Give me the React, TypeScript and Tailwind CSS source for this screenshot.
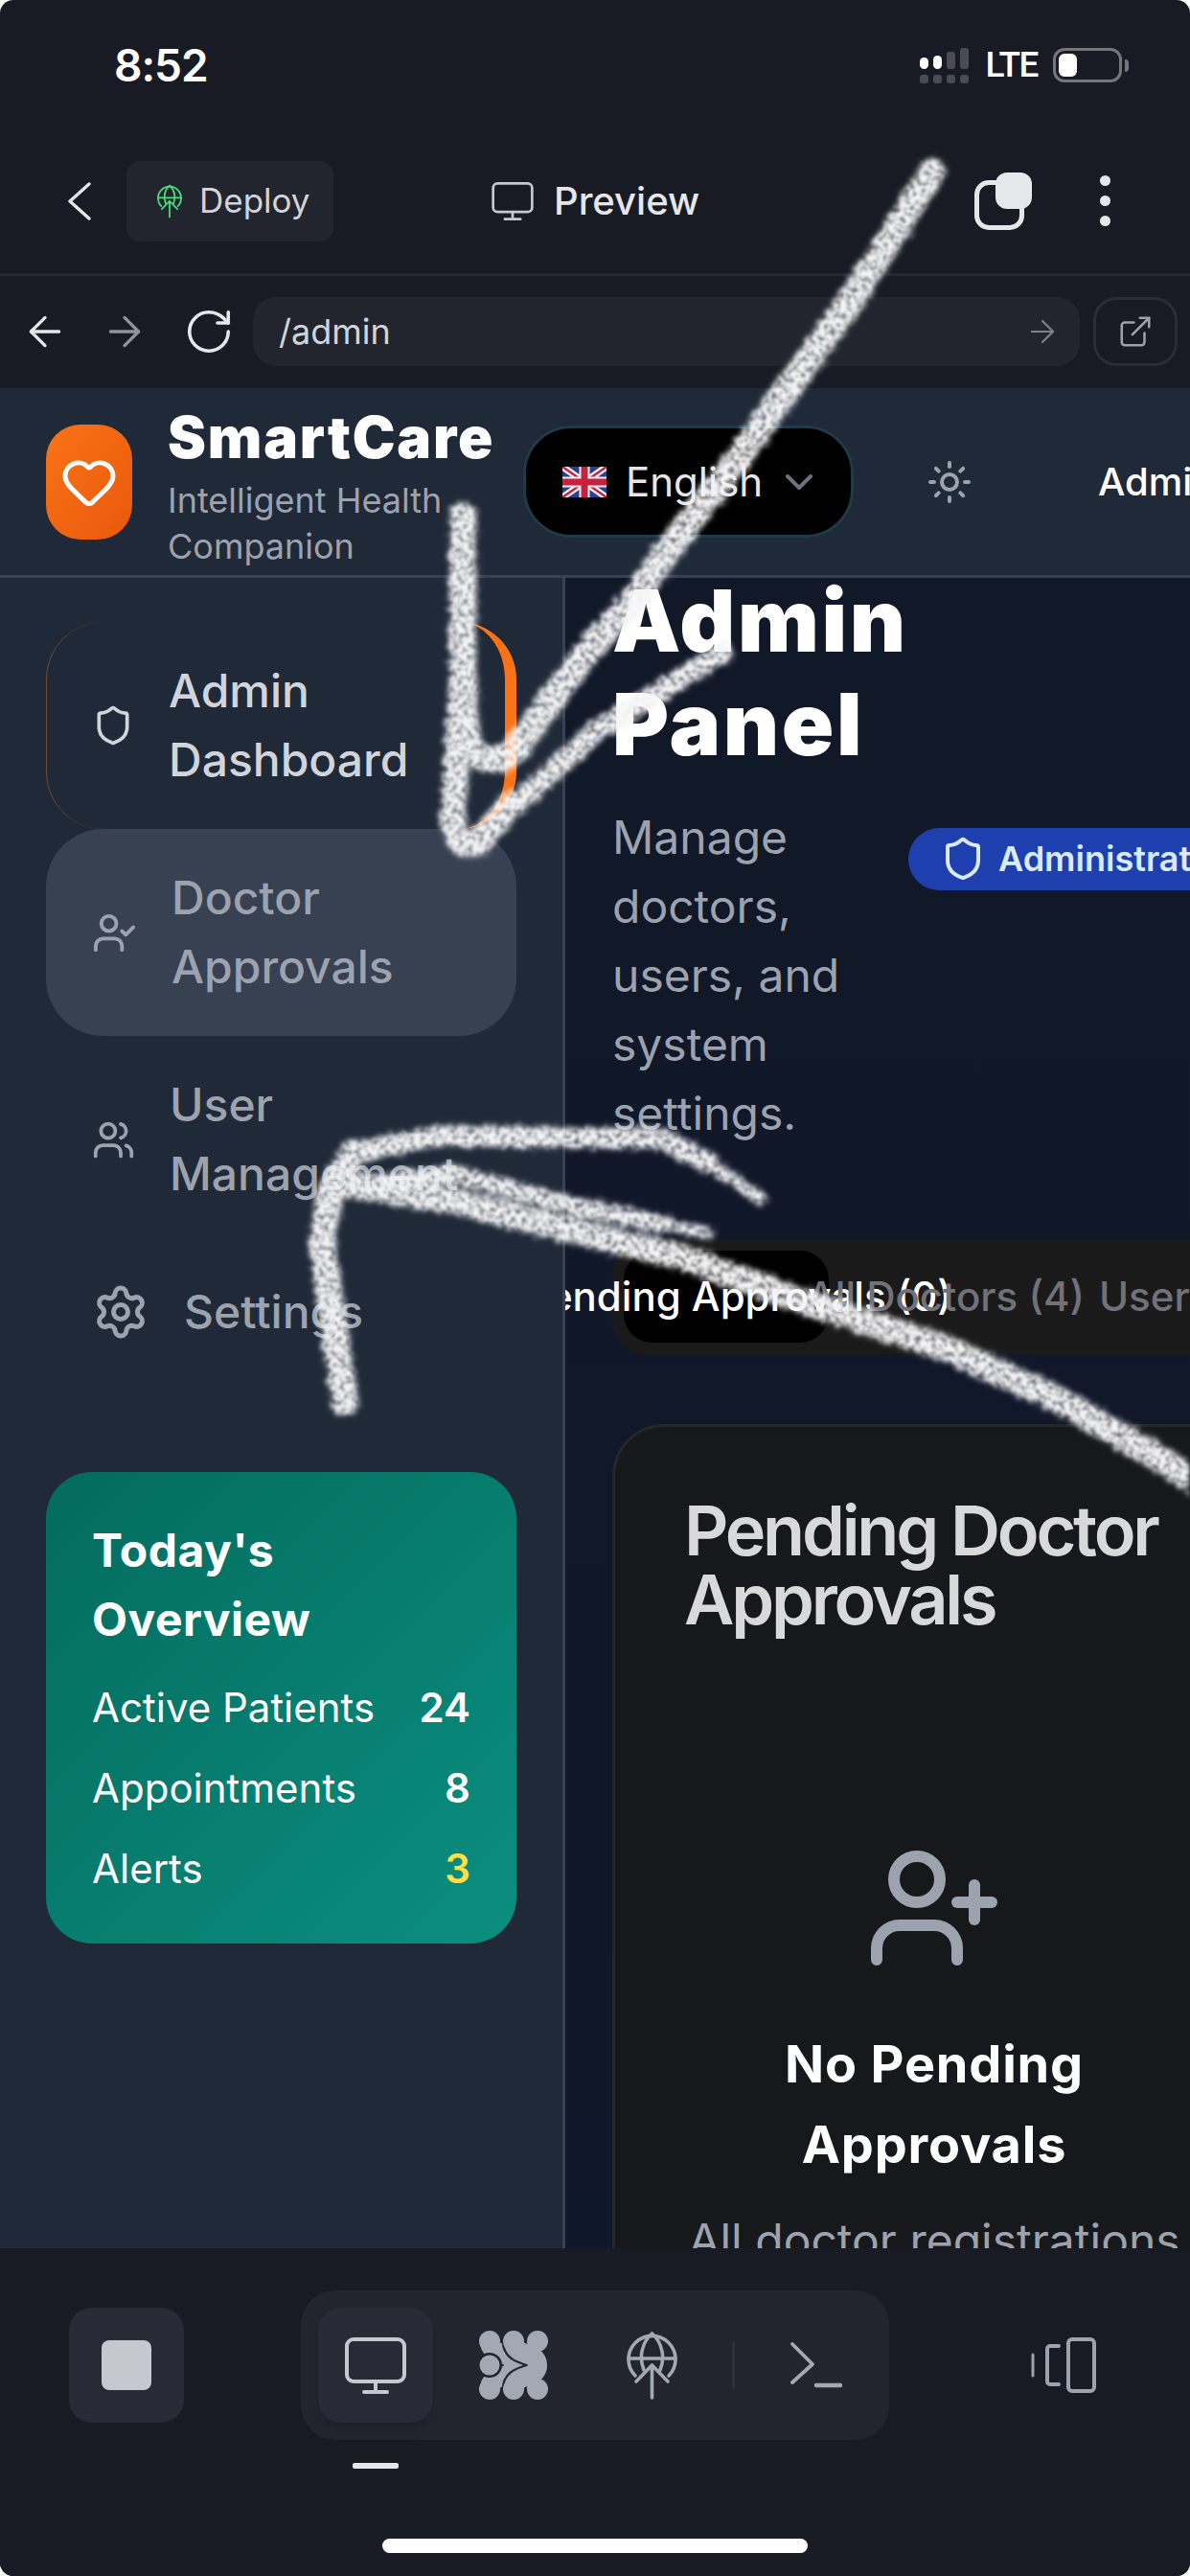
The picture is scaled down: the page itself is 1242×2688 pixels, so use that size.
import React from "react";
import {
	ArrowLeft,
	ArrowRight,
	ChevronDown,
	ExternalLink,
	Heart,
	RotateCw,
	Settings,
	Shield,
	Sun,
	UserCheck,
	UserPlus,
	Users,
} from "lucide-react";

function MonitorIcon({ className }: { className: string }) {
	return (
		<svg viewBox="0 0 64 59" fill="none" stroke="currentColor" strokeWidth="4" strokeLinecap="round" className={className}>
			<rect x="2" y="2" width="60" height="44" rx="7" />
			<path d="M32 46v10M20 57h24" />
		</svg>
	);
}

function GlobeUpIcon({ className }: { className: string }) {
	return (
		<svg viewBox="0 0 53 71" fill="none" stroke="currentColor" strokeWidth="3.6" strokeLinecap="round" strokeLinejoin="round" className={className}>
			<path d="M9 46A24.5 24.5 0 1 1 44 46" />
			<path d="M2 28h49" />
			<path d="M26.5 2C15 12 13 28 18 40M26.5 2C38 12 40 28 35 40" />
			<path d="M26.5 69V36M10 52l16.5-17L43 52" />
		</svg>
	);
}

function BlobsIcon({ className }: { className: string }) {
	const bg = "#22252e";
	const under = ["M11 11C11 28 36 20 36 36", "M11 61C11 44 36 52 36 36"];
	const over = ["M36 11C36 28 61 20 61 36", "M36 61C36 44 61 52 61 36"];
	const caps = [
		[11, 11],
		[36, 11],
		[61, 11],
		[11, 61],
		[36, 61],
		[61, 61],
	];
	return (
		<svg viewBox="0 0 72 72" fill="none" strokeLinecap="round" className={className}>
			{under.map((d) => (
				<path key={d} d={d} stroke="currentColor" strokeWidth="20" />
			))}
			<circle cx="11" cy="36" r="13" fill={bg} />
			<circle cx="11" cy="36" r="10.5" fill="currentColor" />
			{over.map((d) => (
				<path key={d} d={d} stroke={bg} strokeWidth="24.5" />
			))}
			{over.map((d) => (
				<path key={d + "-fill"} d={d} stroke="currentColor" strokeWidth="20" />
			))}
			{caps.map(([cx, cy]) => (
				<circle key={`${cx}-${cy}`} cx={cx} cy={cy} r="11" fill="currentColor" />
			))}
		</svg>
	);
}

function UkFlag() {
	return (
		<svg viewBox="0 0 46 32" className="w-[46px] h-[32px] shrink-0">
			<rect width="46" height="32" rx="2" fill="#27408f" />
			<path d="M0 0l46 32M46 0L0 32" stroke="#f1f1f4" strokeWidth="7" />
			<path d="M0 0l46 32M46 0L0 32" stroke="#c8213c" strokeWidth="2.4" />
			<path d="M23 0v32M0 16h46" stroke="#f1f1f4" strokeWidth="11" />
			<path d="M23 0v32M0 16h46" stroke="#c8213c" strokeWidth="7" />
		</svg>
	);
}

// pen marks scribbled on top of the screenshot
function Scribble() {
	return (
		<svg viewBox="0 0 1242 2688" fill="none" strokeLinecap="round" strokeLinejoin="round" className="absolute inset-0 w-[1242px] h-[2688px] pointer-events-none">
			<defs>
				<filter id="chalk" filterUnits="userSpaceOnUse" x="0" y="0" width="1242" height="2688">
					<feTurbulence type="fractalNoise" baseFrequency="0.18" numOctaves="3" seed="7" result="noise" />
					<feDisplacementMap in="SourceGraphic" in2="noise" scale="14" xChannelSelector="R" yChannelSelector="G" result="rough" />
					<feGaussianBlur in="rough" stdDeviation="2.4" result="soft" />
					<feColorMatrix in="noise" type="matrix" values="0 0 0 0 0  0 0 0 0 0  0 0 0 0 0  1.5 0 0 0 0.12" result="grain" />
					<feComposite in="soft" in2="grain" operator="in" />
					<feGaussianBlur stdDeviation="1.3" />
				</filter>
			</defs>
			<g filter="url(#chalk)" stroke="#f4f4f6">
				<path strokeWidth="28" d="M973 179L884 320L828 397L773 475L699 572L662 625L606 688L540 780C525 796 505 798 490 780C483 760 486 720 483 693L483 538" />
				<path strokeWidth="26" d="M483 700L477 780L473 862C478 880 490 886 502 878L532 839" />
				<path strokeWidth="22" d="M492 880L532 845L625 761L754 681" />
				<path strokeWidth="27" d="M1250 1546L1110 1463L988 1407L836 1357L715 1313L594 1283L472 1253L369 1237" />
				<path strokeWidth="28" d="M360 1463L348 1380L336 1297L345 1243L369 1203" />
				<path strokeWidth="22" d="M345 1243L369 1203L460 1185L581 1187L691 1188L739 1213" />
				<path strokeWidth="13" d="M725 1203L760 1228L794 1250" />
				<path strokeWidth="19" d="M351 1240L472 1225L594 1257L690 1277" />
				<path strokeWidth="12" d="M680 1274L739 1287" />
			</g>
		</svg>
	);
}

function StatusBar() {
	return (
		<div className="h-[136px] flex items-center pl-[119px]">
			<span className="text-[46px] font-semibold text-white tracking-[-1px]">8:52</span>
			<div className="ml-auto mr-[64px] flex items-center">
				<div className="flex flex-col gap-[6px] w-[65px]">
					<div className="flex items-end gap-[5px] h-[22px]">
						<div className="w-[9px] h-[12px] rounded-full bg-white" />
						<div className="w-[9px] h-[14px] rounded-full bg-white" />
						<div className="w-[9px] h-[18px] rounded-[3px] bg-[#4a4c55]" />
						<div className="w-[9px] h-[22px] rounded-[3px] bg-[#4a4c55]" />
					</div>
					<div className="flex gap-[5px]">
						<div className="w-[9px] h-[9px] rounded-[3px] bg-[#4a4c55]" />
						<div className="w-[9px] h-[9px] rounded-[3px] bg-[#4a4c55]" />
						<div className="w-[9px] h-[9px] rounded-[3px] bg-[#4a4c55]" />
						<div className="w-[9px] h-[9px] rounded-[3px] bg-[#4a4c55]" />
					</div>
				</div>
				<span className="ml-[4px] font-['Roboto',sans-serif] text-[37px] font-medium text-white tracking-[-1.5px]">LTE</span>
				<div className="ml-[16px] w-[72px] h-[36px] rounded-[12px] border-[3.5px] border-[#74767c] p-[3px]">
					<div className="w-[19px] h-full rounded-[6px] bg-white" />
				</div>
				<div className="ml-[3px] w-[4px] h-[13px] rounded-r-full bg-[#74767c]" />
			</div>
		</div>
	);
}

function ToolBar() {
	return (
		<div className="h-[152px] flex items-center pb-[2px] border-b-[3px] border-[#262933]">
			<svg viewBox="0 0 24 40" fill="none" stroke="#e5e7eb" strokeWidth="3.4" strokeLinecap="round" strokeLinejoin="round" className="ml-[71px] w-[24px] h-[40px]">
				<path d="M22 2L2 20l20 18" />
			</svg>
			<div className="ml-[37px] w-[216px] h-[84px] rounded-[14px] bg-[#22252e] flex items-center pl-[32px] gap-[18px]">
				<GlobeUpIcon className="w-[26px] h-[36px] text-[#4ade80]" />
				<span className="text-[35px] text-[#d1d5db]">Deploy</span>
			</div>
			<MonitorIcon className="ml-[165px] w-[44px] h-[40px] text-[#c5c8ce]" />
			<span className="ml-[21px] text-[40px] font-medium text-[#e5e7eb]">Preview</span>
			<div className="relative ml-[287px] w-[60px] h-[60px]">
				<div className="absolute left-0 bottom-0 w-[52px] h-[52px] rounded-[15px] border-[5px] border-[#e5e7eb]" />
				<div className="absolute right-0 top-0 w-[38px] h-[38px] rounded-[12px] bg-[#e5e7eb]" />
			</div>
			<div className="ml-[71px] flex flex-col gap-[10px]">
				<div className="w-[11px] h-[11px] rounded-full bg-[#e5e7eb]" />
				<div className="w-[11px] h-[11px] rounded-full bg-[#e5e7eb]" />
				<div className="w-[11px] h-[11px] rounded-full bg-[#e5e7eb]" />
			</div>
		</div>
	);
}

function UrlBar() {
	return (
		<div className="h-[117px] flex items-center pb-[2px]">
			<ArrowLeft strokeWidth={1.6} className="ml-[22px] w-[50px] h-[50px] text-[#e5e7eb]" />
			<ArrowRight strokeWidth={1.6} className="ml-[33px] w-[50px] h-[50px] text-[#8f939b]" />
			<RotateCw strokeWidth={1.6} className="ml-[36px] w-[54px] h-[54px] text-[#e5e7eb]" />
			<div className="ml-[19px] w-[863px] h-[72px] rounded-[24px] bg-[#22252e] flex items-center pl-[27px] pr-[20px]">
				<span className="text-[36px] text-[#d1d5db]">/admin</span>
				<ArrowRight strokeWidth={1.4} className="ml-auto w-[38px] h-[38px] text-[#7f828a]" />
			</div>
			<div className="ml-[14px] w-[88px] h-[72px] rounded-[24px] border-[3px] border-[#2a2d36] flex items-center justify-center">
				<ExternalLink strokeWidth={1.6} className="w-[38px] h-[38px] text-[#9ca3af]" />
			</div>
		</div>
	);
}

function AppHeader() {
	return (
		<div className="h-[198px] shrink-0 bg-[#1f2937] border-b-[3px] border-[#374151] flex items-center overflow-hidden">
			<div className="ml-[48px] w-[90px] h-[120px] shrink-0 rounded-[36px] bg-gradient-to-br from-[#f97316] to-[#ea580c] flex items-center justify-center">
				<Heart strokeWidth={2} className="w-[60px] h-[60px] text-white" />
			</div>
			<div className="ml-[37px] w-[335px] shrink-0 pt-[3px]">
				<div className="text-[60px] leading-[84px] font-black text-white tracking-[1.8px]">SmartCare</div>
				<div className="text-[36px] leading-[48px] text-[#9ca3af]">Intelligent Health Companion</div>
			</div>
			<div className="ml-[36px] w-[345px] h-[117px] shrink-0 rounded-[50px] bg-black border-[3px] border-[#1f3b47] flex items-center pl-[38px]">
				<UkFlag />
				<span className="ml-[20px] text-[42px] text-[#e5e7eb]">English</span>
				<ChevronDown strokeWidth={2} className="ml-[14px] w-[48px] h-[48px] text-[#6b7280]" />
			</div>
			<Sun strokeWidth={2} className="ml-[76px] w-[48px] h-[48px] shrink-0 text-[#9ca3af]" />
			<span className="ml-[131px] text-[40px] font-medium text-white whitespace-nowrap">Admin</span>
		</div>
	);
}

function NavItem({ icon, label, className }: { icon: React.ReactNode; label: string; className: string }) {
	return (
		<div className={`flex items-center gap-[36px] px-[48px] py-[36px] rounded-[60px] text-[48px] leading-[72px] font-medium ${className}`}>
			{icon}
			<span>{label}</span>
		</div>
	);
}

function Sidebar() {
	return (
		<aside className="w-[590px] shrink-0 border-r-[3px] border-[#374151] bg-[#1f2937] px-[48px] pt-[46px]">
			<NavItem
				label="Admin Dashboard"
				className="text-[#d1d5db] border-r-[12px] border-l-[1.5px] border-r-[#f97316] border-l-[#7a4a2c] !pl-[47px]"
				icon={<Shield strokeWidth={2} className="w-[44px] h-[46px] shrink-0" />}
			/>
			<NavItem
				label="Doctor Approvals"
				className="text-[#9ca3af] bg-[#374151]"
				icon={<UserCheck strokeWidth={2} className="w-[47px] h-[47px] shrink-0" />}
			/>
			<NavItem
				label="User Management"
				className="text-[#9ca3af]"
				icon={<Users strokeWidth={2} className="w-[45px] h-[45px] shrink-0" />}
			/>
			<NavItem
				label="Settings"
				className="text-[#9ca3af]"
				icon={<Settings strokeWidth={2} className="w-[60px] h-[60px] shrink-0" />}
			/>
			<div className="mt-[95px] rounded-[48px] p-[48px] bg-gradient-to-br from-[#036b5e] to-[#0c8f80] text-white">
				<div className="-mt-[2px] text-[48px] leading-[72px] font-bold tracking-[0.5px]">Today's Overview</div>
				<div className="mt-[26px] flex flex-col gap-[24px] text-[42px] leading-[60px]">
					<div className="flex justify-between">
						<span>Active Patients</span>
						<span className="font-semibold">24</span>
					</div>
					<div className="flex justify-between">
						<span>Appointments</span>
						<span className="font-semibold">8</span>
					</div>
					<div className="flex justify-between">
						<span>Alerts</span>
						<span className="font-semibold text-[#fde047]">3</span>
					</div>
				</div>
			</div>
		</aside>
	);
}

function MainPanel() {
	return (
		<main className="flex-1 min-w-0 overflow-hidden bg-gradient-to-b from-[#111827] to-[#0f172a] pl-[49px]">
			<div className="-mt-[9px] flex items-center">
				<div className="w-[309px] shrink-0">
					<h1 className="text-[90px] leading-[108px] font-black text-white tracking-[2.6px]">Admin Panel</h1>
					<p className="mt-[28px] text-[48px] leading-[72px] text-[#9ca3af]">Manage doctors, users, and system settings.</p>
				</div>
				<div className="shrink-0 h-[65px] rounded-full bg-[#1e40af] text-[#dbeafe] flex items-center pl-[33px] pr-[36px] gap-[13px]">
					<Shield strokeWidth={2} className="w-[48px] h-[48px]" />
					<span className="text-[36px] font-semibold whitespace-nowrap">Administrator</span>
				</div>
			</div>
			<div className="mt-[95px] w-[900px] h-[120px] rounded-[36px] bg-[#1a1a1a] p-[12px] flex gap-[15px] text-[42px] font-medium leading-[60px]">
				<div className="w-[214px] shrink-0 pl-[24px] rounded-[30px] bg-black text-white flex items-center justify-center whitespace-nowrap">Pending Approvals (0)</div>
				<div className="w-[214px] shrink-0 text-[#71717a] flex items-center justify-center whitespace-nowrap">All Doctors (4)</div>
				<div className="w-[214px] shrink-0 pl-[38px] text-[#71717a] flex items-center whitespace-nowrap">User Management</div>
			</div>
			<section className="mt-[73px] w-[672px] rounded-[54px] border-[3px] border-[#27272a] bg-[#17181c] p-[72px]">
				<h2 className="text-[72px] leading-[72px] font-semibold tracking-[-3.2px] text-[#d9d9db]">Pending Doctor Approvals</h2>
				<div className="mt-[214px] flex flex-col items-center text-center">
					<UserPlus strokeWidth={2} className="w-[144px] h-[144px] text-[#9ca3af]" />
					<h3 className="mt-[49px] text-[54px] leading-[84px] font-bold text-white tracking-[0.8px]">No Pending Approvals</h3>
					<p className="mt-[22px] text-[48px] leading-[72px] text-[#9ca3af]">All doctor registrations have been reviewed.</p>
				</div>
			</section>
		</main>
	);
}

function BottomBar() {
	return (
		<div className="h-[342px] shrink-0 bg-[#181b24] pt-[44px]">
			<div className="flex items-center pl-[72px]">
				<div className="w-[120px] h-[120px] rounded-[24px] bg-[#282a35] flex items-center justify-center">
					<div className="w-[52px] h-[52px] rounded-[8px] bg-[#c5c8ce]" />
				</div>
				<div className="ml-[122px] w-[614px] h-[156px] rounded-[36px] bg-[#22252e] flex items-center pl-[18px]">
					<div className="w-[120px] h-[120px] rounded-[24px] bg-[#282a35] shadow-lg flex items-center justify-center">
						<MonitorIcon className="w-[64px] h-[59px] text-[#c5c8ce]" />
					</div>
					<div className="ml-[24px] w-[120px] flex justify-center">
						<BlobsIcon className="w-[72px] h-[72px] text-[#a3a9b3]" />
					</div>
					<div className="ml-[24px] w-[120px] flex justify-center">
						<GlobeUpIcon className="w-[53px] h-[71px] text-[#a3a9b3]" />
					</div>
					<div className="ml-[24px] w-[3px] h-[48px] bg-[#2e3039]" />
					<svg viewBox="0 0 54 48" fill="none" stroke="#a3a9b3" strokeLinecap="round" strokeLinejoin="round" className="ml-[58px] w-[54px] h-[48px]">
						<path strokeWidth="3.8" d="M2 2l21 21L2 42" />
						<path strokeWidth="4.5" d="M27 45h25" />
					</svg>
				</div>
				<svg viewBox="0 0 68 58" fill="none" stroke="#9ca3af" strokeLinecap="round" strokeLinejoin="round" className="ml-[148px] w-[68px] h-[58px]">
					<rect x="39" y="2" width="27" height="54" rx="4" strokeWidth="4" />
					<path strokeWidth="4" d="M29 9H20a3 3 0 0 0-3 3v34a3 3 0 0 0 3 3h9" />
					<path strokeWidth="3" d="M2 18v22" />
				</svg>
			</div>
			<div className="mt-[24px] ml-[368px] w-[48px] h-[6px] rounded-[2px] bg-[#e5e7eb]" />
			<div className="mt-[73px] mx-auto w-[444px] h-[15px] rounded-full bg-white" />
		</div>
	);
}

export default function App() {
	return (
		<div className="relative w-[1242px] h-[2688px] overflow-hidden rounded-[14px] bg-[#181b24] flex flex-col font-['Inter',sans-serif]">
			<div className="h-[405px] shrink-0">
				<StatusBar />
				<ToolBar />
				<UrlBar />
			</div>
			<div className="flex-1 min-h-0 flex flex-col overflow-hidden">
				<AppHeader />
				<div className="flex-1 min-h-0 flex overflow-hidden">
					<Sidebar />
					<MainPanel />
				</div>
			</div>
			<BottomBar />
			<Scribble />
		</div>
	);
}
